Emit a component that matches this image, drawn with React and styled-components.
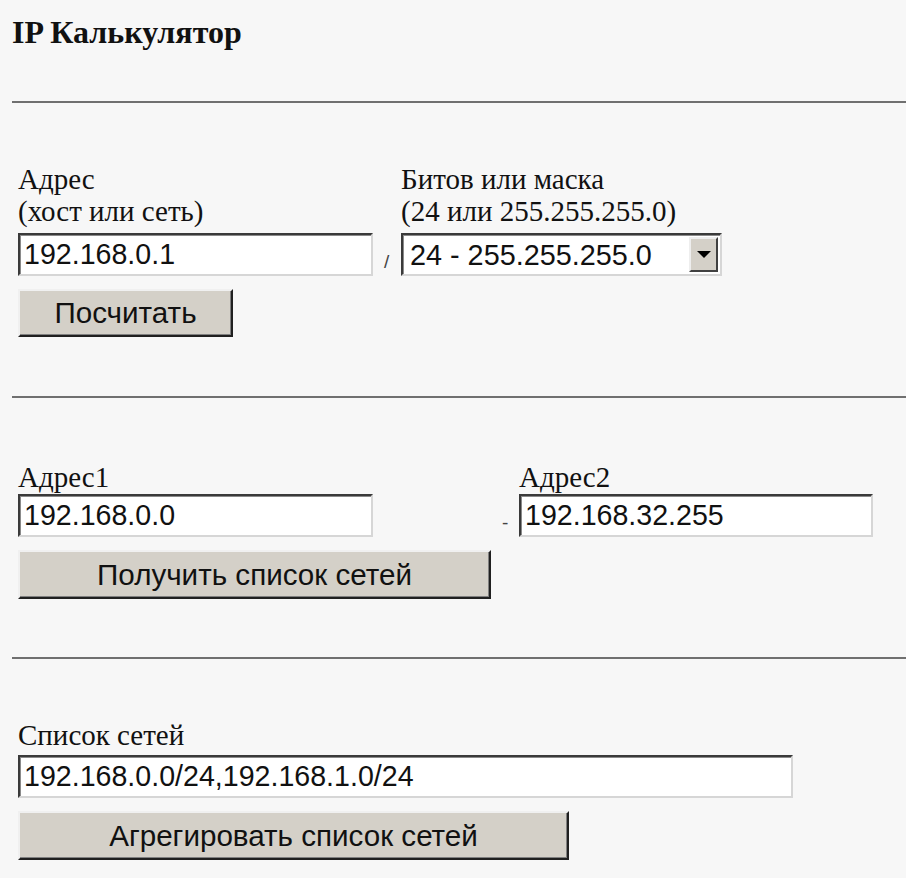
import React from "react";
import styled, { createGlobalStyle } from "styled-components";

const Global = createGlobalStyle`
  html, body { margin: 0; padding: 0; background: #f7f7f7; }
  body { font-family: "Liberation Serif", "Times New Roman", serif; color: #111; }
  #root { min-height: 878px; }
`;

const Page = styled.div`
  padding: 15px 0 0 12px;
`;

const Title = styled.h1`
  margin: 0;
  font-size: 32px;
  line-height: 35px;
  font-weight: bold;
  color: #111;
`;

const Rule = styled.hr`
  margin: ${(p) => p.$top}px 0 0;
  border: 0;
  height: 2px;
  background: #707070;
`;

const Section = styled.form`
  margin: ${(p) => p.$top}px 0 0 6px;
  display: grid;
  grid-template-columns: ${(p) => p.$cols};
  justify-content: start;
  align-items: start;
`;

const Label = styled.div`
  font-size: 29px;
  line-height: 32px;
  margin-bottom: ${(p) => p.$gap}px;
`;

const TextInput = styled.input`
  box-sizing: border-box;
  width: ${(p) => p.$w}px;
  height: 43px;
  margin: 0;
  padding: 0 4px;
  background: #fff;
  border-style: solid;
  border-width: 2px;
  border-color: #3a3a3a #d6d6d6 #d6d6d6 #3a3a3a;
  box-shadow: inset 1px 1px 0 #8a8a8a;
  font-family: "Liberation Sans", Arial, sans-serif;
  font-size: 28.6px;
  color: #111;
  outline: none;
`;

const SelectBox = styled.div`
  box-sizing: border-box;
  width: 321px;
  height: 43px;
  display: flex;
  align-items: center;
  background: #fff;
  border-style: solid;
  border-width: 2px;
  border-color: #3a3a3a #d6d6d6 #d6d6d6 #3a3a3a;
  box-shadow: inset 1px 1px 0 #8a8a8a;
  padding-right: 2px;
`;

const NativeSelect = styled.select`
  flex: 1;
  appearance: none;
  -webkit-appearance: none;
  border: 0;
  background: transparent;
  height: 100%;
  padding: 0 0 0 7px;
  margin: 0;
  font-family: "Liberation Sans", Arial, sans-serif;
  font-size: 28.8px;
  color: #111;
  outline: none;
`;

const ArrowButton = styled.span`
  box-sizing: border-box;
  width: 29px;
  height: 35px;
  display: flex;
  align-items: center;
  justify-content: center;
  background: #d4d0c8;
  border-style: solid;
  border-width: 2px;
  border-color: #eeeeee #404040 #404040 #eeeeee;
  &::after {
    content: "";
    width: 0;
    height: 0;
    border-left: 7px solid transparent;
    border-right: 7px solid transparent;
    border-top: 7px solid #000;
  }
`;

const Sep = styled.span`
  align-self: end;
  padding-left: ${(p) => p.$pad}px;
  margin-bottom: 5px;
  font-family: "Liberation Sans", Arial, sans-serif;
  font-size: 19px;
  line-height: 19px;
  color: #444;
`;

const Button = styled.button`
  box-sizing: border-box;
  grid-column: 1;
  width: ${(p) => p.$w}px;
  height: ${(p) => p.$h}px;
  margin-top: 13px;
  padding: 0;
  background: #d4d0c8;
  border-style: solid;
  border-width: 2px;
  border-color: #f0f0f0 #202020 #202020 #f0f0f0;
  box-shadow: inset -1px -1px 0 #808080;
  font-family: "Liberation Sans", Arial, sans-serif;
  font-size: 29.6px;
  color: #111;
  cursor: pointer;
`;

const Stack = styled.div`
  display: flex;
  flex-direction: column;
  align-items: flex-start;
`;

export default function App() {
  return (
    <>
      <Global />
      <Page>
        <Title>IP Калькулятор</Title>
        <Rule $top={51} />

        <Section $top={60} $cols="355px 28px auto" onSubmit={(e) => e.preventDefault()}>
          <Label $gap={6}>
            Адрес
            <br />
            (хост или сеть)
          </Label>
          <span />
          <Label $gap={6}>
            Битов или маска
            <br />
            (24 или 255.255.255.0)
          </Label>
          <TextInput $w={355} defaultValue="192.168.0.1" />
          <Sep $pad={11}>/</Sep>
          <SelectBox>
            <NativeSelect defaultValue="24">
              <option value="24">24 - 255.255.255.0</option>
            </NativeSelect>
            <ArrowButton />
          </SelectBox>
          <Button $w={215} $h={48} type="submit">Посчитать</Button>
        </Section>

        <Rule $top={59} />

        <Section $top={63} $cols="473px 28px auto" onSubmit={(e) => e.preventDefault()}>
          <Label $gap={1}>Адрес1</Label>
          <span />
          <Label $gap={1}>Адрес2</Label>
          <TextInput $w={355} defaultValue="192.168.0.0" />
          <Sep $pad={11}>-</Sep>
          <TextInput $w={354} defaultValue="192.168.32.255" />
          <Button $w={473} $h={49} type="submit">Получить список сетей</Button>
        </Section>

        <Rule $top={58} />

        <Section $top={60} $cols="auto" onSubmit={(e) => e.preventDefault()}>
          <Stack>
            <Label $gap={4}>Список сетей</Label>
            <TextInput $w={775} defaultValue="192.168.0.0/24,192.168.1.0/24" />
            <Button $w={551} $h={49} type="submit">Агрегировать список сетей</Button>
          </Stack>
        </Section>
      </Page>
    </>
  );
}
